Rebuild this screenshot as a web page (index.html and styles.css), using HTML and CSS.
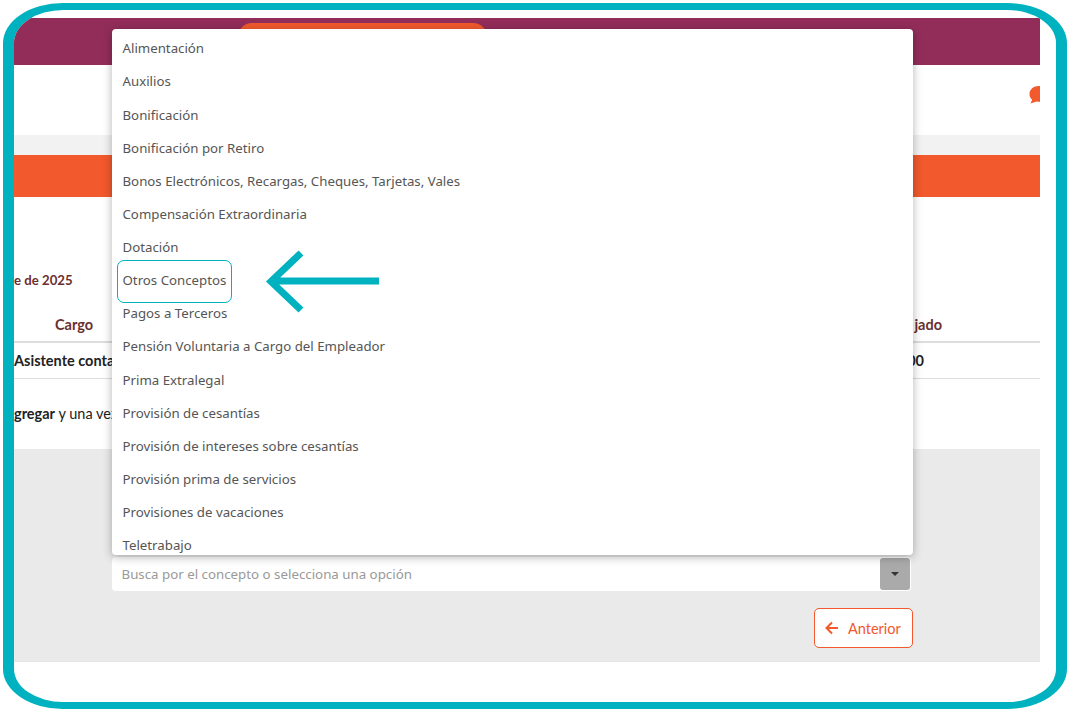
FILE: index.html
```html
<!DOCTYPE html>
<html lang="es">
<head>
    <meta charset="utf-8">
    <title>Conceptos</title>
    <link rel="stylesheet" href="styles.css">
</head>
<body>
<div class="frame">
    <div class="page">
        <div class="topBar"><div class="topPill"></div></div>
        <div class="header">
            <svg class="chatIcon" width="20" height="18" viewBox="0 0 20 18">
                <path d="M10 0C4.500 0 .5 3.400.5 8c0 2.400 1 4.400 2.700 5.800L1.500 17.500l6-2c.8.200 1.700.300 2.500.300 5.500 0 9.500-3.400 9.500-7.800S15.500 0 10 0z" fill="#f2592c"/>
            </svg>
        </div>
        <div class="greyBand"></div>
        <div class="orangeBand"></div>
        <div class="summary">
            <p class="period">e de 2025</p>
            <div class="tableHead">
                <span>Cargo</span>
                <span>jado</span>
            </div>
            <div class="tableRow">
                <span>Asistente conta</span>
                <span>00</span>
            </div>
            <p class="note"><b>gregar</b> y una vez</p>
        </div>
        <div class="panel">
            <div class="conceptInput">
                <span class="placeholder">Busca por el concepto o selecciona una opción</span>
                <span class="caretBtn"><span class="caret"></span></span>
            </div>
            <button class="prevBtn">
                <svg width="14" height="14" viewBox="0 0 14 14">
                    <path d="M13 7H2M7 1.500 1.500 7 7 12.500" fill="none" stroke="#f2592c" stroke-width="2"/>
                </svg>
                Anterior
            </button>
        </div>
    </div>

    <ul class="dropdown">
        <li>Alimentación</li>
        <li>Auxilios</li>
        <li>Bonificación</li>
        <li>Bonificación por Retiro</li>
        <li>Bonos Electrónicos, Recargas, Cheques, Tarjetas, Vales</li>
        <li>Compensación Extraordinaria</li>
        <li>Dotación</li>
        <li class="marked">Otros Conceptos</li>
        <li>Pagos a Terceros</li>
        <li>Pensión Voluntaria a Cargo del Empleador</li>
        <li>Prima Extralegal</li>
        <li>Provisión de cesantías</li>
        <li>Provisión de intereses sobre cesantías</li>
        <li>Provisión prima de servicios</li>
        <li>Provisiones de vacaciones</li>
        <li>Teletrabajo</li>
    </ul>

    <svg class="pointer" width="120" height="66" viewBox="0 0 120 66">
        <path d="M116 32H9M38 4 8 32.500 38 61" fill="none" stroke="#00b1bf" stroke-width="7"/>
    </svg>
</div>
</body>
</html>
```

FILE: styles.css
```css
* {
    box-sizing: border-box;
}
body {
    margin: 0;
    background: #fff;
    font-family: "Noto Sans", "Liberation Sans", sans-serif;
}
.frame {
    position: relative;
    width: 1064px;
    height: 706px;
    margin: 3px 0 0 3px;
    padding: 8px 16px 0 0;
    border: solid #00b1bf;
    border-width: 7px 11px;
    border-radius: 60px / 40px;
    overflow: hidden;
}
.page {
    width: 1026px;
    overflow: hidden;
}
.topBar {
    height: 47px;
    padding: 5px 0 0 224px;
    background: #922d5a;
}
.topPill {
    width: 249px;
    height: 42px;
    border-radius: 14px 14px 0 0;
    background: #f2592c;
}
.header {
    display: flex;
    justify-content: flex-end;
    height: 70px;
    padding-top: 21px;
    background: #fff;
}
.chatIcon {
    margin-right: -9px;
}
.greyBand {
    height: 20px;
    background: #f2f2f2;
}
.orangeBand {
    height: 42px;
    background: #f2592c;
}
.summary {
    height: 252px;
    padding-top: 73px;
    font-family: Lato, "Liberation Sans", sans-serif;
    font-size: 14.500px;
    color: #222;
}
.period {
    margin: 0 0 19px;
    font-size: 13.200px;
    line-height: 20px;
    font-weight: bold;
    color: #6b2f2f;
}
.tableHead {
    display: flex;
    justify-content: space-between;
    height: 34px;
    padding: 6px 98px 0 41px;
    border-bottom: 2px solid #ddd;
    line-height: 20px;
    font-weight: bold;
    color: #6b2f2f;
}
.tableRow {
    display: flex;
    justify-content: space-between;
    height: 36px;
    padding: 8px 116px 0 0;
    border-bottom: 1px solid #ddd;
    line-height: 20px;
    font-weight: bold;
}
.note {
    margin: 25px 0 0;
    line-height: 20px;
}
.panel {
    display: flex;
    flex-direction: column;
    align-items: flex-end;
    height: 213px;
    padding: 108px 127px 0 98px;
    background: #eaeaea;
    border-bottom: 1px solid #e4e4e4;
}
.conceptInput {
    display: flex;
    align-items: center;
    justify-content: space-between;
    width: 799px;
    height: 34px;
    margin-right: 2px;
    padding: 1px 1px 1px 9.500px;
    border-radius: 4px;
    background: #fff;
}
.placeholder {
    font-size: 13.300px;
    color: #999;
}
.caretBtn {
    display: flex;
    align-items: center;
    justify-content: center;
    width: 30px;
    height: 32px;
    border-radius: 3px;
    background: #aaa;
}
.caret {
    border: 4px solid transparent;
    border-top: 4px solid #333;
    border-bottom: 0;
}
.prevBtn {
    display: flex;
    align-items: center;
    gap: 9px;
    width: 99px;
    height: 40px;
    margin-top: 17px;
    padding: 0 0 0 10px;
    border: 1px solid #f2592c;
    border-radius: 5px;
    background: #fff;
    font-family: Lato, "Liberation Sans", sans-serif;
    font-size: 14.500px;
    color: #f2592c;
}
.dropdown {
    position: absolute;
    left: 98px;
    top: 19px;
    width: 801px;
    height: 526px;
    margin: 0;
    padding: 3.300px 0 0;
    overflow: hidden;
    list-style: none;
    background: #fff;
    border-radius: 4px;
    box-shadow: 0 2px 10px rgba(0, 0, 0, .3);
}
.dropdown li {
    position: relative;
    height: 33.130px;
    padding-left: 10.500px;
    font-size: 13.250px;
    line-height: 33px;
    color: #555;
}
.marked::after {
    content: "";
    position: absolute;
    left: 5px;
    top: -4.500px;
    width: 113px;
    height: 41px;
    border: 1.500px solid #00b1bf;
    border-radius: 7px;
}
.pointer {
    position: absolute;
    left: 248.500px;
    top: 239px;
}
```
